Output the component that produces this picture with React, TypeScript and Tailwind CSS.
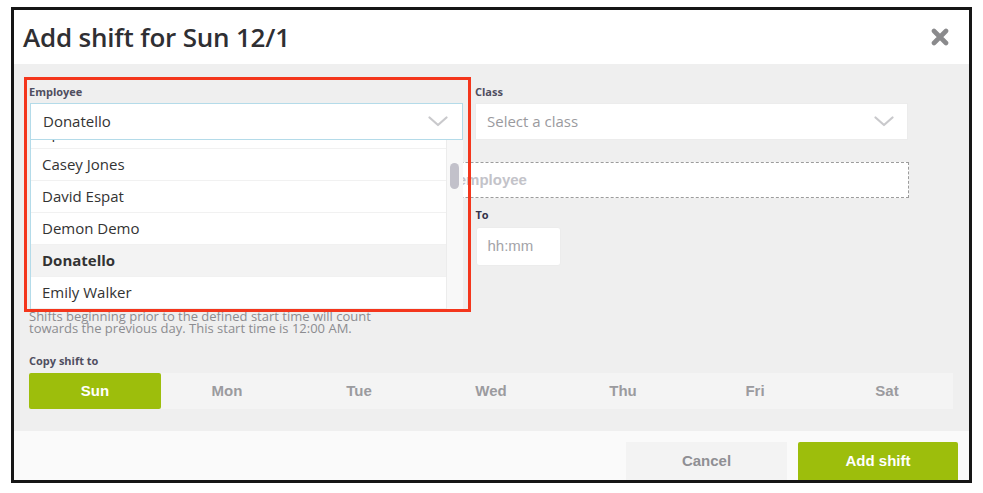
import React from "react";

const employees = ["April O'Neil", "Casey Jones", "David Espat", "Demon Demo", "Donatello", "Emily Walker", "Leonardo"];
const days = ["Sun", "Mon", "Tue", "Wed", "Thu", "Fri", "Sat"];

function Chevron() {
    return (
        <svg width="20" height="11" viewBox="0 0 20 11" className="shrink-0">
            <path d="M1.5 1.5 L10 9 L18.5 1.5" fill="none" stroke="#c9c9cc" strokeWidth="2.2" strokeLinecap="round" strokeLinejoin="round" />
        </svg>
    );
}

function CloseIcon() {
    return (
        <svg width="18" height="18" viewBox="0 0 18 18">
            <path d="M3 3 L15 15 M15 3 L3 15" stroke="#8a8a8c" strokeWidth="4.6" strokeLinecap="round" />
        </svg>
    );
}

export default function App() {
    return (
        <div className="w-[983px] h-[493px] bg-white pt-[7px] pl-[11px] font-['Open_Sans',sans-serif]">
            <div className="relative w-[961px] h-[476px] border-[3px] border-[#161616] flex flex-col">
                {/* header */}
                <header className="h-[54px] bg-white flex items-center justify-between pl-[9px] pr-[20px]">
                    <h2 className="text-[26px] font-semibold text-[#2f2f33] tracking-[-0.2px]">Add shift for Sun 12/1</h2>
                    <CloseIcon />
                </header>

                {/* body */}
                <div className="h-[367px] bg-[#efefef] pl-[15px] pr-[16px] pt-[21px]">
                    <div className="w-[879px] grid grid-cols-2 gap-x-[12px] pl-px">
                        <div className="relative">
                            <p className="text-[11px] leading-[14px] font-bold text-[#4f4e60] mb-[4px] -ml-px">Employee</p>
                            <div className="h-[37px] bg-white border border-[#b4dbe9] flex items-center justify-between pl-[12px] pr-[14px]">
                                <span className="text-[15px] text-[#333]">Donatello</span>
                                <Chevron />
                            </div>
                            <div className="absolute left-0 top-full w-full h-[170px] z-10 bg-white border-l border-[#b4dbe9] flex overflow-hidden">
                                <div className="flex-1 -mt-[23px]">
                                    {employees.map((name) => (
                                        <div
                                            key={name}
                                            className={
                                                name === "Donatello"
                                                    ? "h-[32px] flex items-center pl-[11px] text-[15px] text-[#333] font-bold bg-[#f3f3f3] border-b border-[#f1f1f1]"
                                                    : "h-[32px] flex items-center pl-[11px] text-[15px] text-[#333] border-b border-[#f1f1f1]"
                                            }
                                        >
                                            {name}
                                        </div>
                                    ))}
                                </div>
                                <div className="w-[17px] bg-[#f8f8f8] border-l border-[#ececec] pt-[23px] pl-[3px]">
                                    <div className="w-[9px] h-[26px] rounded-full bg-[#c2c1ca]" />
                                </div>
                            </div>
                        </div>
                        <div>
                            <p className="text-[11px] leading-[14px] font-bold text-[#4f4e60] mb-[4px]">Class</p>
                            <div className="h-[37px] bg-white border border-[#ececec] flex items-center justify-between pl-[11px] pr-[13px]">
                                <span className="text-[15px] text-[#9a9a9e]">Select a class</span>
                                <Chevron />
                            </div>
                        </div>
                    </div>

                    <div className="w-[879px] ml-px mt-[22px] h-[36px] bg-white border border-dashed border-[#9c9c9c] flex items-center justify-center">
                        <span className="text-[15px] font-bold text-[#c3c3c9] font-['Liberation_Sans',sans-serif]">+ Add employee</span>
                    </div>

                    <div className="w-[879px] ml-px grid grid-cols-2 gap-x-[12px] mt-[10px]">
                        <div>
                            <p className="text-[11px] leading-[14px] font-bold text-[#4f4e60] mb-[5px]">From</p>
                            <div className="w-[85px] h-[39px] bg-white rounded-[3px] flex items-center pl-[11px] text-[15px] text-[#a3a3a8] font-['Liberation_Sans',sans-serif]">hh:mm</div>
                        </div>
                        <div>
                            <p className="text-[11px] leading-[14px] font-bold text-[#33324a] mb-[5px]">To</p>
                            <div className="w-[85px] h-[39px] bg-white rounded-[3px] border border-[#ececec] flex items-center pl-[11px] text-[15px] text-[#a3a3a8] font-['Liberation_Sans',sans-serif]">hh:mm</div>
                        </div>
                    </div>

                    <p className="mt-[44px] text-[13px] leading-[12px] text-[#8c8c90] w-[380px]">
                        Shifts beginning prior to the defined start time will count towards the previous day. This start time is 12:00 AM.
                    </p>

                    <p className="mt-[20px] text-[11px] leading-[14px] font-bold text-[#4f4e60] mb-[5px]">Copy shift to</p>
                    <div className="w-[924px] grid grid-cols-7 h-[36px] bg-[#f4f4f4] font-['Liberation_Sans',sans-serif]">
                        {days.map((d) => (
                            <div
                                key={d}
                                className={
                                    d === "Sun"
                                        ? "flex items-center justify-center bg-[#9dbe0c] rounded-[2px] text-white text-[15px] font-bold"
                                        : "flex items-center justify-center text-[#9b9b9f] text-[15px] font-bold"
                                }
                            >
                                {d}
                            </div>
                        ))}
                    </div>
                </div>

                {/* footer */}
                <footer className="flex-1 bg-[#fafafa] flex items-end justify-end gap-[11px] pr-[11px] font-['Liberation_Sans',sans-serif]">
                    <button className="w-[161px] h-[38px] bg-[#f3f3f3] text-[15px] font-bold text-[#8f8f94]">Cancel</button>
                    <button className="w-[160px] h-[38px] bg-[#9dbe0c] rounded-t-[2px] text-[15px] font-bold text-white">Add shift</button>
                </footer>

                {/* annotation */}
                <div className="absolute left-[10px] top-[67px] w-[447px] h-[235px] border-[3px] border-[#f4361c] z-20 pointer-events-none" />
            </div>
        </div>
    );
}
